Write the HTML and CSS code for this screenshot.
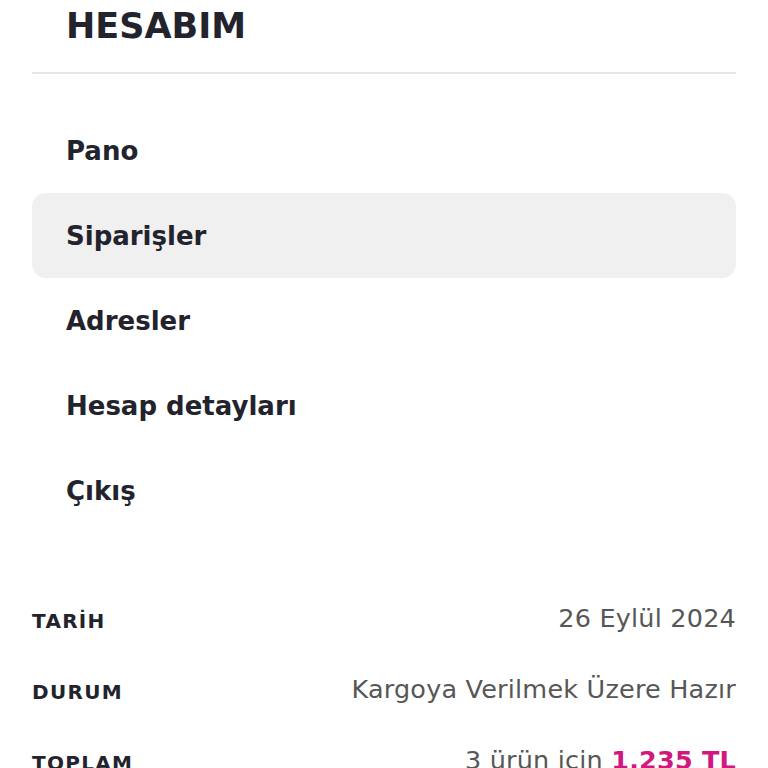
FILE: index.html
```html
<!DOCTYPE html>
<html lang="tr">
<head>
<meta charset="utf-8">
<link rel="stylesheet" href="styles.css">
</head>
<body>
<div class="page">
  <h1 class="title">HESABIM</h1>
  <nav class="menu">
    <a class="item">Pano</a>
    <a class="item active">Siparişler</a>
    <a class="item">Adresler</a>
    <a class="item">Hesap detayları</a>
    <a class="item">Çıkış</a>
  </nav>
  <dl class="details">
    <div class="row"><dt>TARİH</dt><dd>26 Eylül 2024</dd></div>
    <div class="row"><dt>DURUM</dt><dd>Kargoya Verilmek Üzere Hazır</dd></div>
    <div class="row"><dt>TOPLAM</dt><dd>3 ürün için <strong class="price">1.235 TL</strong></dd></div>
  </dl>
</div>
</body>
</html>
```
FILE: styles.css
```css
* { box-sizing: border-box; }
html, body { margin: 0; padding: 0; background: #fff; overflow: hidden; }
body { font-family: "DejaVu Sans", "Noto Sans", sans-serif; color: #1f2029; }
.page { padding: 0 32px; }
.title {
  margin: 0;
  padding: 3px 34px 0;
  height: 74px;
  font-size: 35px;
  font-weight: 700;
  line-height: 46px;
  color: #22232c;
  border-bottom: 2px solid #e6e6e6;
}
.menu { display: flex; flex-direction: column; padding-top: 34px; }
.item {
  display: flex;
  align-items: center;
  height: 85px;
  padding: 1px 34px 0;
  font-size: 26px;
  font-weight: 700;
  color: #22232c;
  border-radius: 14px;
}
.item.active { background: #f0f0f0; }
.details { margin: 48px 0 0; }
.row {
  display: flex;
  justify-content: space-between;
  align-items: center;
  height: 71px;
}
dt {
  font-size: 20px;
  font-weight: 700;
  letter-spacing: 1.3px;
  color: #22232c;
  padding-top: 8px;
}
dd {
  margin: 0;
  font-size: 25.5px;
  font-weight: 400;
  letter-spacing: 0.2px;
  color: #575757;
  padding-top: 2px;
}
.price { color: #d0187f; font-weight: 700; }
```
